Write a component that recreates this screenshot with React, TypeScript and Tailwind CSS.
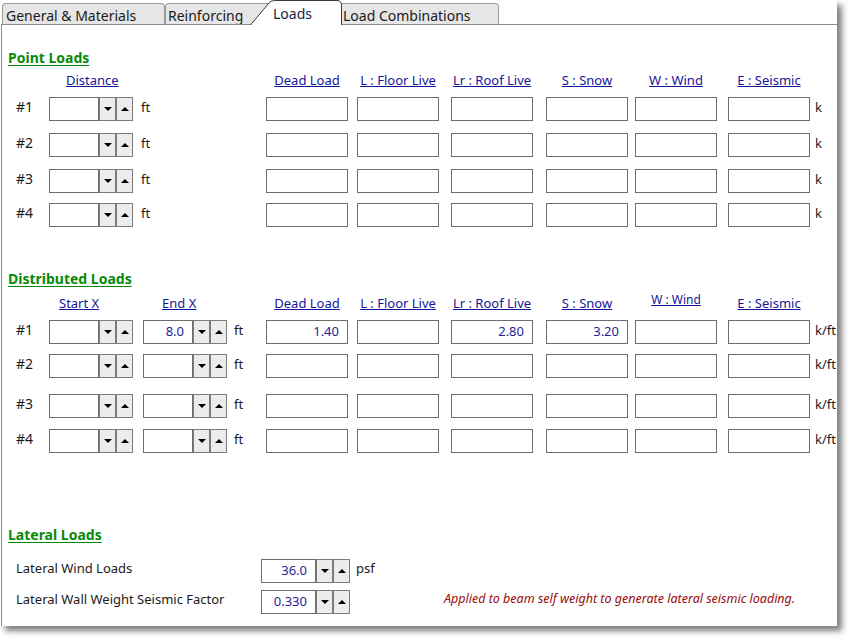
import React from 'react';

const colWidths = ['w-[91px]', 'w-[94px]', 'w-[95px]', 'w-[89px]', 'w-[93px]', 'w-[82px]'];
const loadCols = ['Dead Load', 'L : Floor Live', 'Lr : Roof Live', 'S : Snow', 'W : Wind', 'E : Seismic'];

const Down = () => (
  <span className="block h-0 w-0 border-l-[4px] border-r-[4px] border-t-[4px] border-l-transparent border-r-transparent border-t-black" />
);
const Up = () => (
  <span className="block h-0 w-0 border-l-[4px] border-r-[4px] border-b-[4px] border-l-transparent border-r-transparent border-b-black" />
);

function Spin({ value = '', box = 'w-[50px]' }: { value?: string; box?: string }) {
  return (
    <div className="flex h-[24px] shrink-0">
      <div className={`${box} h-full border border-[#6d6d6d] bg-white pr-[8px] text-right text-[13px] leading-[20px] text-[#1e1e96]`}>
        {value}
      </div>
      <div className="flex h-full w-[17px] items-center justify-center border border-[#7c7c7c] bg-[#ececec]">
        <Down />
      </div>
      <div className="flex h-full w-[17px] items-center justify-center border border-[#7c7c7c] bg-[#ececec]">
        <Up />
      </div>
    </div>
  );
}

function Box({ value = '' }: { value?: string }) {
  return (
    <div className="h-[24px] w-[82px] border border-[#6d6d6d] bg-white pr-[8px] text-right text-[13px] leading-[20px] text-[#1e1e96]">
      {value}
    </div>
  );
}

function Heading({ children, className }: { children: React.ReactNode; className: string }) {
  return (
    <div className={`${className} ml-[6px] text-[14px] font-bold leading-[18px] text-[#078a07] underline underline-offset-2`}>
      {children}
    </div>
  );
}

function LoadCells({ values, unit }: { values: string[]; unit: string }) {
  return (
    <>
      {colWidths.map((w, i) => (
        <div key={i} className={`${w} shrink-0`}>
          <Box value={values[i]} />
        </div>
      ))}
      <span className="ml-[5px] self-start text-[13px] leading-[20px] text-[#1a1a1a]">{unit}</span>
    </>
  );
}

function HeaderCells({ raiseWind }: { raiseWind?: boolean }) {
  return (
    <>
      {loadCols.map((c, i) => (
        <div key={c} className={`${colWidths[i]} shrink-0`}>
          <div
            className={`w-[82px] text-center underline ${
              raiseWind && i === 4 ? '-translate-y-[3px] text-[12px]' : ''
            }`}
          >
            {c}
          </div>
        </div>
      ))}
    </>
  );
}

const pointTops = ['mt-[9px]', 'mt-[12px]', 'mt-[12px]', 'mt-[10px]'];
const distTops = ['mt-[9px]', 'mt-[10px]', 'mt-[16px]', 'mt-[11px]'];
const distValues = [
  ['1.40', '', '2.80', '3.20', '', ''],
  ['', '', '', '', '', ''],
  ['', '', '', '', '', ''],
  ['', '', '', '', '', ''],
];

export default function App() {
  return (
    <div className="h-[642px] w-[853px] bg-white font-['Noto_Sans',sans-serif] text-[#1a1a1a]">
      <div className="flex h-[626px] w-[837px] flex-col bg-white shadow-[5px_5px_6px_rgba(0,0,0,0.5)]">
        {/* tabs */}
        <div className="flex h-[24px] shrink-0 items-end pl-[2px] text-[14px] leading-[18px]">
          <div className="h-[21px] w-[163px] rounded-t-[4px] border border-b-0 border-[#9a9a9a] bg-[#e6e6e6] pl-[3px] pt-[3px]">
            General &amp; Materials
          </div>
          <div className="h-[21px] w-[106px] rounded-t-[4px] border border-b-0 border-[#9a9a9a] bg-[#e6e6e6] pl-[2px] pt-[3px]">
            Reinforcing
          </div>
          <div className="relative z-10 -mb-px -ml-[21px] h-[25px] w-[92px] pl-[23px] pt-[5px] text-[#1b1b40]">
            <svg className="absolute inset-0" width="92" height="25" viewBox="0 0 92 25">
              <path
                d="M0.5,25 L19,3 Q21,0.5 24.5,0.5 L87,0.5 Q91.5,0.5 91.5,5 L91.5,25"
                fill="#fff"
                stroke="#3a3a3a"
                strokeWidth="1"
              />
            </svg>
            <span className="relative">Loads</span>
          </div>
          <div className="h-[21px] w-[157px] rounded-tr-[4px] border border-b-0 border-l-0 border-[#9a9a9a] bg-[#e6e6e6] pl-px pt-[3px]">
            Load Combinations
          </div>
        </div>

        {/* panel */}
        <div className="ml-px flex flex-1 flex-col border-l border-t border-[#8c8c8c]">
          <Heading className="mt-[24px]">Point Loads</Heading>
          <div className="mt-[5px] flex text-[13px] leading-[16px] text-[#15159a]">
            <div className="w-[264px] shrink-0 pl-[64px]">
              <span className="underline">Distance</span>
            </div>
            <HeaderCells />
          </div>
          {pointTops.map((mt, i) => (
            <div key={i} className={`${mt} flex h-[24px]`}>
              <div className="flex w-[264px] shrink-0 pl-[14px]">
                <span className="w-[33px] self-start text-[14px] leading-[20px]">#{i + 1}</span>
                <Spin />
                <span className="ml-[8px] self-start text-[13px] leading-[20px]">ft</span>
              </div>
              <LoadCells values={['', '', '', '', '', '']} unit="k" />
            </div>
          ))}

          <Heading className="mt-[43px]">Distributed Loads</Heading>
          <div className="mt-[7px] flex text-[13px] leading-[16px] text-[#15159a]">
            <div className="flex w-[264px] shrink-0 pl-[57px]">
              <span className="w-[103px] shrink-0">
                <span className="underline">Start X</span>
              </span>
              <span className="underline">End X</span>
            </div>
            <HeaderCells raiseWind />
          </div>
          {distTops.map((mt, i) => (
            <div key={i} className={`${mt} flex h-[24px]`}>
              <div className="flex w-[264px] shrink-0 pl-[14px]">
                <span className="w-[33px] self-start text-[14px] leading-[20px]">#{i + 1}</span>
                <Spin />
                <div className="ml-[10px]">
                  <Spin value={i === 0 ? '8.0' : ''} />
                </div>
                <span className="ml-[7px] self-start text-[13px] leading-[20px]">ft</span>
              </div>
              <LoadCells values={distValues[i]} unit="k/ft" />
            </div>
          ))}

          <Heading className="mt-[73px]">Lateral Loads</Heading>
          <div className="mt-[15px] flex h-[24px] text-[13px] leading-[18px]">
            <div className="w-[259px] shrink-0 self-start pl-[14px]">Lateral Wind Loads</div>
            <Spin value="36.0" box="w-[55px]" />
            <span className="ml-[6px] self-start">psf</span>
          </div>
          <div className="mt-[7px] flex h-[24px] text-[13px] leading-[18px]">
            <div className="w-[259px] shrink-0 self-start pl-[14px]">Lateral Wall Weight Seismic Factor</div>
            <Spin value="0.330" box="w-[55px]" />
            <span className="ml-[94px] self-start text-[12.5px] italic text-[#9a0a0a]">
              Applied to beam self weight to generate lateral seismic loading.
            </span>
          </div>
        </div>
      </div>
    </div>
  );
}
